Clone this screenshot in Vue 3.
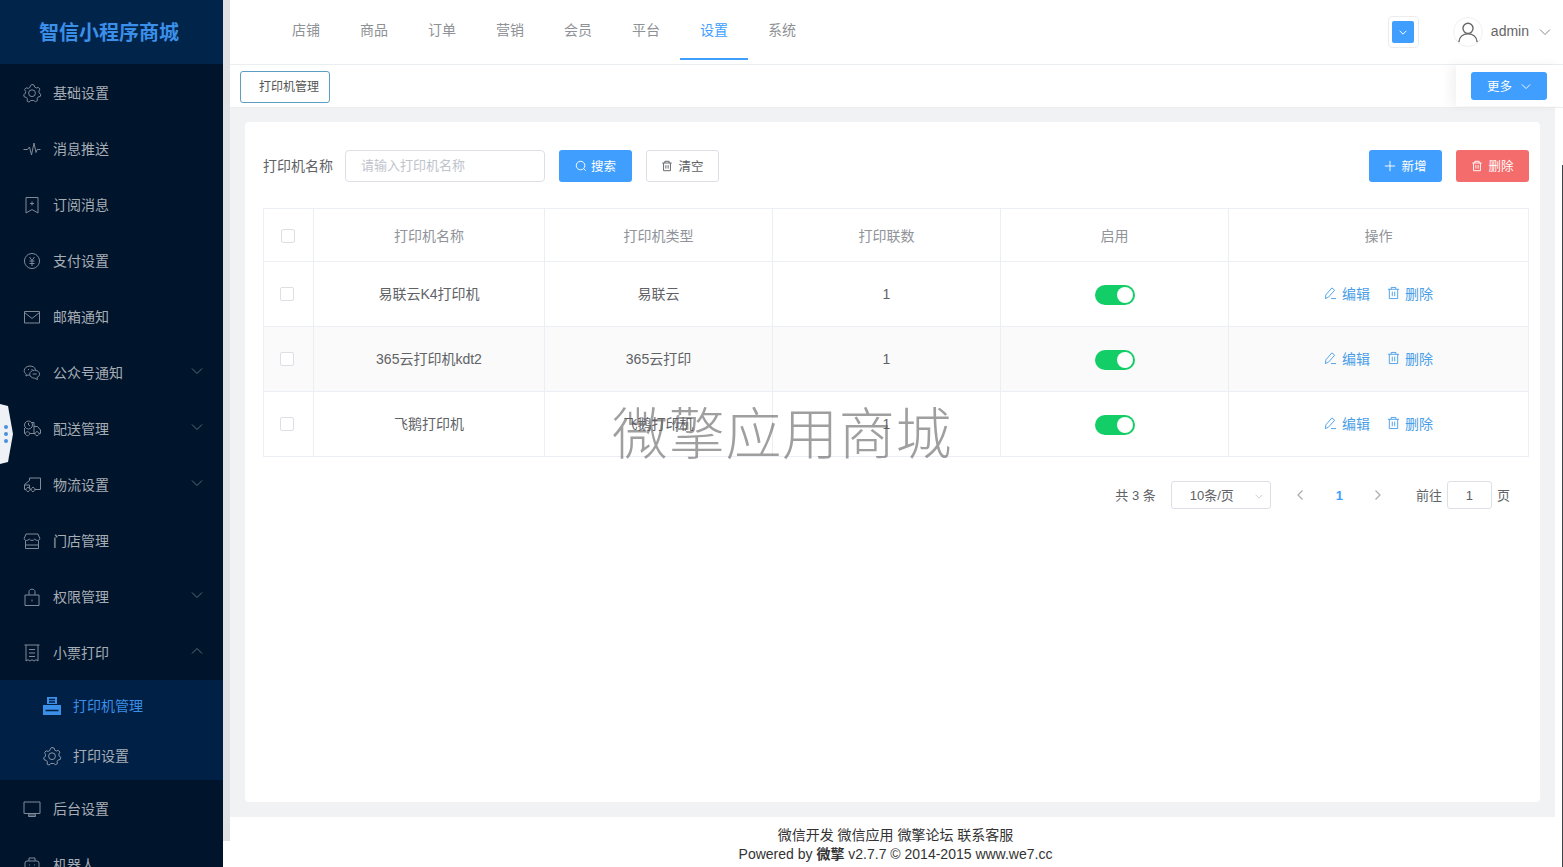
<script setup>
const icons = {
  gear: ['M10 1.500l2 .5.7 2.100 1.600.9 2.100-.6 1.500 1.700-1 2 .1 1.800 1.800 1.400-.5 2.100-2.200.6-1 1.500.3 2.200-1.900 1-1.800-1.200H8.800L7 19.100l-1.900-1 .3-2.200-1-1.500-2.200-.6-.5-2.100 1.800-1.400.1-1.800-1-2 1.500-1.700 2.100.6 1.600-.9.7-2.100z', 'M10 6.800a3.400 3.400 0 1 0 0 6.800 3.400 3.400 0 0 0 0-6.800z'],
  pulse: ['M1.500 10.500h4l2-2.500 2 8 2.500-12 2 9.500 1.200-3h3.300'],
  mark: ['M4 2.500h12v15.500l-6-3.500L4 18z', 'M10 6.500v4M8 8.500h4'],
  pay: ['M10 2.500a7.500 7.500 0 1 1-.01 0z', 'M7.500 6L10 9.500 12.500 6M7.500 10h5M7.500 12.500h5M10 9.500v5.500'],
  mail: ['M2.500 4.500h15v11.500h-15z', 'M2.500 5.500l7.500 6 7.500-6'],
  wechat: ['M8 3c-3.200 0-5.800 2.100-5.800 4.700 0 1.400.8 2.700 2.100 3.600l-.4 1.700 2.100-1c.6.100 1.200.2 1.900.2', 'M8 3c2.800 0 5.100 1.600 5.600 3.800', 'M12.700 7.200c-2.800 0-5 1.800-5 4s2.200 4 5 4l2.700 1.300-.4-2.100c1.600-.7 2.600-1.900 2.600-3.200 0-2.200-2.100-4-4.900-4z', 'M6 6.500h1M9.500 6.500h1M10.700 11h4'],
  truck: ['M2.500 14.500V9', 'M6.500 2a4 4 0 1 0 .01 0zM6.500 3.800V6l1.500 1', 'M10 3.500h2V14.500M8 14.500h5', 'M12 7.500h3.500l3 3.500v3.500h-1.500', 'M2.500 14.500H3', 'M5.500 12.700a2 2 0 1 0 .01 0zM15 12.700a2 2 0 1 0 .01 0z'],
  van: ['M7.500 5.500V3h11v11.500h-6', 'M7.500 5.500L2.500 9.500v5h1.500', 'M2.500 10h5V14', 'M8.500 14.500h1', 'M6 12.500a2 2 0 1 0 .01 0zM11 12.500a2 2 0 1 0 .01 0z'],
  shop: ['M4 3h12l1.800 4.500c0 1.200-1 2-2.300 2-1 0-2.100-.6-2.800-1.400-.6.8-1.600 1.400-2.700 1.400S7.900 8.900 7.300 8.100C6.600 8.900 5.500 9.500 4.500 9.500c-1.300 0-2.300-.8-2.300-2z', 'M3.500 9.500V17.500h13V9.500', 'M3.500 14h13'],
  lock: ['M3 8h14v10.500H3z', 'M7 8V4.500C7 3.100 8.300 2.200 10 2.200s3 .9 3 2.300V8', 'M10 12.500v2'],
  receipt: ['M4 2v16l2-1.300 2 1.300 2-1.300 2 1.300 2-1.300 2 1.300V2', 'M2.500 2h15M7 6.500h6M7 10h6M7 13.500h6'],
  monitor: ['M2 3h16v11.500H2z', 'M7 14.500l-.5 3h7l-.5-3M6.500 16h7'],
  robot: ['M5 6h10a2 2 0 0 1 2 2v8H3V8a2 2 0 0 1 2-2z', 'M7 6V3h6v3', 'M7 10h1M12 10h1']
}
const menu = [
  { name: '基础设置', icon: 'gear' },
  { name: '消息推送', icon: 'pulse' },
  { name: '订阅消息', icon: 'mark' },
  { name: '支付设置', icon: 'pay' },
  { name: '邮箱通知', icon: 'mail' },
  { name: '公众号通知', icon: 'wechat', arrow: 'down' },
  { name: '配送管理', icon: 'truck', arrow: 'down' },
  { name: '物流设置', icon: 'van', arrow: 'down' },
  { name: '门店管理', icon: 'shop' },
  { name: '权限管理', icon: 'lock', arrow: 'down' },
  { name: '小票打印', icon: 'receipt', arrow: 'up' }
]
const tabs = ['店铺', '商品', '订单', '营销', '会员', '平台', '设置', '系统']
const rows = [
  { name: '易联云K4打印机', type: '易联云' },
  { name: '365云打印机kdt2', type: '365云打印' },
  { name: '飞鹅打印机', type: '飞鹅打印机' }
]
</script>

<template>
  <div class="page">
    <aside class="side">
      <div class="logo">智信小程序商城</div>
      <template v-for="m in menu" :key="m.name">
        <div class="item">
          <svg class="ic" viewBox="0 0 20 20"><path v-for="d in icons[m.icon]" :key="d" :d="d" /></svg>
          <span>{{ m.name }}</span>
          <svg v-if="m.arrow" class="arr" :class="{ up: m.arrow === 'up' }" viewBox="0 0 12 8"><path d="M1 1.500l5 5 5-5" /></svg>
        </div>
      </template>
      <div class="sub">
        <div class="subitem on">
          <svg class="ic" viewBox="0 0 20 20"><path class="fill" d="M5 1h10v7H5zM1 9h18v10H1z" /><path class="cut" d="M7 3.500h6M7 6h6M3.500 14.500h13" /></svg>
          <span>打印机管理</span>
        </div>
        <div class="subitem">
          <svg class="ic" viewBox="0 0 20 20"><path v-for="d in icons.gear" :key="d" :d="d" /></svg>
          <span>打印设置</span>
        </div>
      </div>
      <div class="item">
        <svg class="ic" viewBox="0 0 20 20"><path v-for="d in icons.monitor" :key="d" :d="d" /></svg>
        <span>后台设置</span>
      </div>
      <div class="item">
        <svg class="ic" viewBox="0 0 20 20"><path v-for="d in icons.robot" :key="d" :d="d" /></svg>
        <span>机器人</span>
      </div>
    </aside>
    <div class="handle"><i></i><i></i><i></i></div>
    <div class="rail"></div>

    <main class="main">
      <header class="top">
        <nav class="nav">
          <a v-for="t in tabs" :key="t" :class="{ on: t === '设置' }">{{ t }}</a>
        </nav>
        <div class="tools">
          <div class="pick"><div class="pick-in"><svg viewBox="0 0 12 8"><path d="M2 2l4 4 4-4" /></svg></div></div>
          <div class="avatar"><svg viewBox="0 0 24 24"><circle cx="12" cy="8" r="5.500" /><path d="M2 23c.5-5.500 4.500-9 10-9s9.500 3.500 10 9" /></svg></div>
          <span class="uname">admin</span>
          <svg class="uarr" viewBox="0 0 12 8"><path d="M1 1.500l5 5 5-5" /></svg>
        </div>
      </header>

      <div class="tagbar">
        <div class="tag">打印机管理</div>
        <div class="more-wrap">
          <button class="btn blue more"><span class="lbl">更多</span><svg viewBox="0 0 12 8"><path d="M1 1.500l5 5 5-5" /></svg></button>
        </div>
      </div>

      <section class="body">
        <div class="card">
          <div class="filters">
            <label>打印机名称</label>
            <div class="input">请输入打印机名称</div>
            <button class="btn blue w73 gap14">
              <svg viewBox="0 0 14 14"><circle cx="6.500" cy="6.500" r="5" /><path d="M10 10l2.500 2.500" /></svg><span class="lbl">搜索</span>
            </button>
            <button class="btn plain w73">
              <svg viewBox="0 0 14 14"><path d="M1.500 3.500h11M4.500 3.500V1.500h5v2M3 3.500v9h8v-9M5.700 6v4M8.300 6v4" /></svg><span class="lbl">清空</span>
            </button>
            <div class="spacer"></div>
            <button class="btn blue w73">
              <svg viewBox="0 0 14 14"><path d="M7 1v12M1 7h12" /></svg><span class="lbl">新增</span>
            </button>
            <button class="btn red w73">
              <svg viewBox="0 0 14 14"><path d="M1.500 3.500h11M4.500 3.500V1.500h5v2M3 3.500v9h8v-9M5.700 6v4M8.300 6v4" /></svg><span class="lbl">删除</span>
            </button>
          </div>

          <div class="table">
            <div class="tr head">
              <div class="td c0"><span class="check"></span></div>
              <div class="td c1">打印机名称</div>
              <div class="td c2">打印机类型</div>
              <div class="td c2">打印联数</div>
              <div class="td c2">启用</div>
              <div class="td c3">操作</div>
            </div>
            <div v-for="r in rows" :key="r.name" class="tr row">
              <div class="td c0"><span class="check"></span></div>
              <div class="td c1 txt">{{ r.name }}</div>
              <div class="td c2 txt">{{ r.type }}</div>
              <div class="td c2">1</div>
              <div class="td c2"><span class="switch"><i></i></span></div>
              <div class="td c3 ops txt">
                <a><svg viewBox="0 0 14 14"><path d="M1.500 13l.5-4L8.500 1.500l3 2.500-6.700 7.500zM7.500 13H13" /></svg>编辑</a>
                <a><svg viewBox="0 0 14 14"><path d="M1 3h12M4.500 3V1h5v2M2.500 3v10h9V3M5.700 5.500v5M8.300 5.500v5" /></svg>删除</a>
              </div>
            </div>
          </div>

          <div class="pager">
            <span class="pt">共 3 条</span>
            <div class="size">10条/页<svg viewBox="0 0 12 8"><path d="M2 2l4 4 4-4" /></svg></div>
            <svg class="pg" viewBox="0 0 8 12"><path d="M6.500 1.500L2 6l4.500 4.500" /></svg>
            <b>1</b>
            <svg class="pg" viewBox="0 0 8 12"><path d="M1.500 1.500L6 6l-4.500 4.500" /></svg>
            <span class="goto pt">前往</span>
            <div class="num">1</div>
            <span class="pt">页</span>
          </div>
          <div class="mark">微擎应用商城</div>
        </div>
      </section>

      <footer class="foot">
        <div class="links">微信开发 微信应用 微擎论坛 联系客服</div>
        <div class="power">Powered by <b>微擎</b> v2.7.7 © 2014-2015 www.we7.cc</div>
      </footer>
    </main>
    <div class="edge"></div>
  </div>
</template>

<style>
html, body { margin: 0; overflow: hidden; }
</style>

<style scoped>
.page {
  display: flex;
  width: 1563px;
  height: 867px;
  overflow: hidden;
  position: relative;
  background: #fff;
  font-family: "Liberation Sans", "Noto Sans CJK SC", sans-serif;
  font-size: 14px;
  color: #606266;
}
svg { fill: none; stroke: currentColor; display: block; }
.side { width: 223px; flex: none; background: #00142b; color: #a7adb5; overflow: hidden; }
.logo {
  height: 64px;
  line-height: 66px;
  text-align: center;
  font-size: 20px;
  font-weight: 700;
  color: #3b8fe8;
  background: #01244b;
  padding-right: 5px;
  box-sizing: border-box;
}
.item { height: 56px; display: flex; align-items: center; padding: 2px 0 0 22px; box-sizing: border-box; position: relative; }
.item .ic { width: 20px; height: 20px; margin-right: 11px; color: #808a98; stroke-width: 1; flex: none; }
.item span, .subitem span { line-height: 20px; }
.arr { position: absolute; left: 191px; top: 23px; width: 12px; height: 8px; color: #5f6b7a; stroke-width: 1; }
.arr.up { transform: rotate(180deg); }
.sub { background: #012046; height: 100px; }
.subitem { height: 50px; display: flex; align-items: center; padding: 2px 0 0 42px; box-sizing: border-box; }
.subitem .ic { width: 20px; height: 20px; margin-right: 11px; color: #8c96a3; stroke-width: 1; flex: none; }
.subitem.on { color: #3b8fe8; }
.subitem.on .ic { color: #3b8fe8; }
.fill { fill: #3b8fe8; stroke: none; }
.cut { stroke: #012046; stroke-width: 1.300; }
.handle {
  position: absolute;
  left: 0;
  top: 404px;
  width: 13px;
  height: 60px;
  background: #eef1f6;
  clip-path: polygon(0 0, 8px 2px, 13px 30px, 8px 58px, 0 60px);
  display: flex;
  flex-direction: column;
  align-items: center;
  justify-content: center;
  gap: 3px;
  padding-right: 2px;
  box-sizing: border-box;
}
.handle i { width: 4px; height: 4px; border-radius: 50%; background: #4a8fdc; margin-left: 1px; }
.rail { width: 7px; height: 841px; flex: none; background: #dfe1e4; }
.main { flex: 1; min-width: 0; display: flex; flex-direction: column; height: 867px; }
.top { height: 65px; box-sizing: border-box; border-bottom: 1px solid #ebeef0; display: flex; flex: none; padding-left: 42px; }
.nav { display: flex; height: 60px; }
.nav a { width: 68px; height: 60px; line-height: 60px; text-align: center; color: #8e9196; box-sizing: border-box; }
.nav a.on { color: #409eff; border-bottom: 2px solid #409eff; }
.tools { margin-left: auto; display: flex; align-items: center; padding-right: 12px; height: 64px; }
.pick { width: 31px; height: 32px; box-sizing: border-box; border: 1px solid #ececec; border-radius: 4px; display: flex; align-items: center; justify-content: center; margin-right: 34px; }
.pick-in { width: 22px; height: 22px; background: #409eff; border-radius: 2px; display: flex; align-items: center; justify-content: center; color: #fff; }
.pick-in svg { width: 10px; height: 7px; stroke-width: 1.200; }
.avatar { width: 30px; height: 30px; border-radius: 50%; border: 1px solid #f0f0f0; box-sizing: border-box; display: flex; align-items: center; justify-content: center; color: #666; margin-right: 8px; }
.avatar svg { width: 22px; height: 22px; stroke-width: 1.500; }
.uname { color: #666; margin: -2px 10px 0 0; }
.uarr { width: 12px; height: 8px; color: #888; stroke-width: 1; }
.tagbar { height: 43px; flex: none; display: flex; align-items: flex-start; position: relative; padding: 6px 0 0 10px; box-sizing: border-box; border-bottom: 1px solid #eceef0; }
.tag { width: 90px; height: 32px; box-sizing: border-box; border: 1px solid #5c9dc2; border-radius: 3px; line-height: 30px; text-align: center; font-size: 12px; color: #555; padding-left: 8px; }
.more-wrap { position: absolute; right: 0; top: 0; width: 107px; height: 41px; background: #fff; box-shadow: -6px 0 10px rgba(0, 0, 0, 0.05); padding: 7px 0 0 15px; box-sizing: border-box; }
.btn { font: inherit; font-size: 12.500px; border-radius: 3px; border: 1px solid transparent; display: inline-flex; align-items: center; justify-content: center; box-sizing: border-box; padding: 0; }
.lbl { margin-top: -2px; }
.btn svg { width: 12px; height: 12px; margin-right: 5px; stroke-width: 1.100; }
.blue { background: #409eff; color: #fff; }
.red { background: #f56c6c; color: #fff; }
.plain { background: #fff; border-color: #dcdfe6; color: #606266; }
.more { width: 76px; height: 28px; }
.more svg { width: 10px; height: 7px; margin: 0 0 0 9px; }
.w73 { width: 73px; height: 32px; }
.gap14 svg { margin-right: 4px; }
.body { flex: 1; min-height: 0; background: #f0f2f4; padding: 14px 15px 15px 15px; margin-right: 8px; box-sizing: border-box; }
.card { height: 680px; background: #fff; border-radius: 4px; padding: 28px 11px 0 18px; box-sizing: border-box; position: relative; }
.filters { display: flex; align-items: center; height: 32px; }
.filters label { width: 82px; color: #606266; font-size: 14px; margin-top: -3px; }
.input { width: 200px; height: 32px; box-sizing: border-box; border: 1px solid #dcdfe6; border-radius: 4px; line-height: 30px; padding-left: 15px; color: #c0c4cc; font-size: 13px; margin-right: 14px; }
.filters .plain { margin-left: 14px; }
.spacer { flex: 1; }
.filters .red { margin-left: 14px; }
.table { margin-top: 26px; border: 1px solid #ebeef5; border-bottom: 0; width: 1266px; box-sizing: border-box; }
.tr { display: flex; border-bottom: 1px solid #ebeef5; box-sizing: border-box; }
.head { height: 53px; color: #909399; }
.head .check { margin: 2px 0 0 -1px; }
.row { height: 65px; color: #606266; }
.row:nth-child(3) { background: #fafafa; }
.td { display: flex; align-items: center; justify-content: center; box-sizing: border-box; border-right: 1px solid #ebeef5; flex: none; padding-bottom: 1px; }
.td.txt { padding-bottom: 3px; }
.c0 { width: 50px; }
.c1 { width: 231px; }
.c2 { width: 228px; }
.c3 { flex: 1; border-right: 0; }
.check { width: 14px; height: 14px; border: 1px solid #dcdfe6; border-radius: 2px; box-sizing: border-box; background: #fff; margin-left: -3px; }
.switch { width: 40px; height: 20px; background: #13ce66; border-radius: 10px; position: relative; display: block; margin-top: 2px; }
.switch i { position: absolute; right: 2px; top: 2px; width: 16px; height: 16px; border-radius: 50%; background: #fff; }
.ops { gap: 17px; color: #4a9ee8; }
.ops a { display: flex; align-items: center; }
.ops svg { width: 13px; height: 14px; margin-right: 5px; stroke-width: 1; }
.pager { display: flex; align-items: center; justify-content: flex-end; height: 28px; margin-top: 24px; padding-right: 19px; font-size: 13px; width: 1266px; box-sizing: border-box; color: #606266; }
.pt { margin-top: -2px; }
.size { width: 100px; height: 28px; box-sizing: border-box; border: 1px solid #dcdfe6; border-radius: 3px; margin: 0 25px 0 15px; line-height: 27px; padding-left: 18px; position: relative; }
.size svg { position: absolute; right: 6px; top: 11px; width: 10px; height: 7px; color: #c0c4cc; stroke-width: 1; }
.pg { width: 8px; height: 12px; color: #a8abb2; stroke-width: 1.200; }
.pager b { color: #409eff; margin: 0 31px 0 32px; }
.goto { margin-left: 34px; margin-right: 5px; }
.num { width: 45px; height: 28px; box-sizing: border-box; border: 1px solid #dcdfe6; border-radius: 3px; text-align: center; line-height: 27px; margin-right: 5px; }
.mark { position: absolute; left: 367px; top: 273px; font-size: 56px; letter-spacing: 0.700px; line-height: 70px; font-family: "Noto Sans CJK SC", sans-serif; font-weight: 300; color: rgba(90, 90, 90, 0.58); white-space: nowrap; pointer-events: none; }
.foot { height: 50px; flex: none; text-align: center; color: #333; padding: 9px 2px 0 0; box-sizing: border-box; font-size: 14px; line-height: 19px; background: #fff; }
.edge { position: absolute; right: 0; top: 165px; bottom: 0; width: 1px; background: #3c4248; }
</style>
